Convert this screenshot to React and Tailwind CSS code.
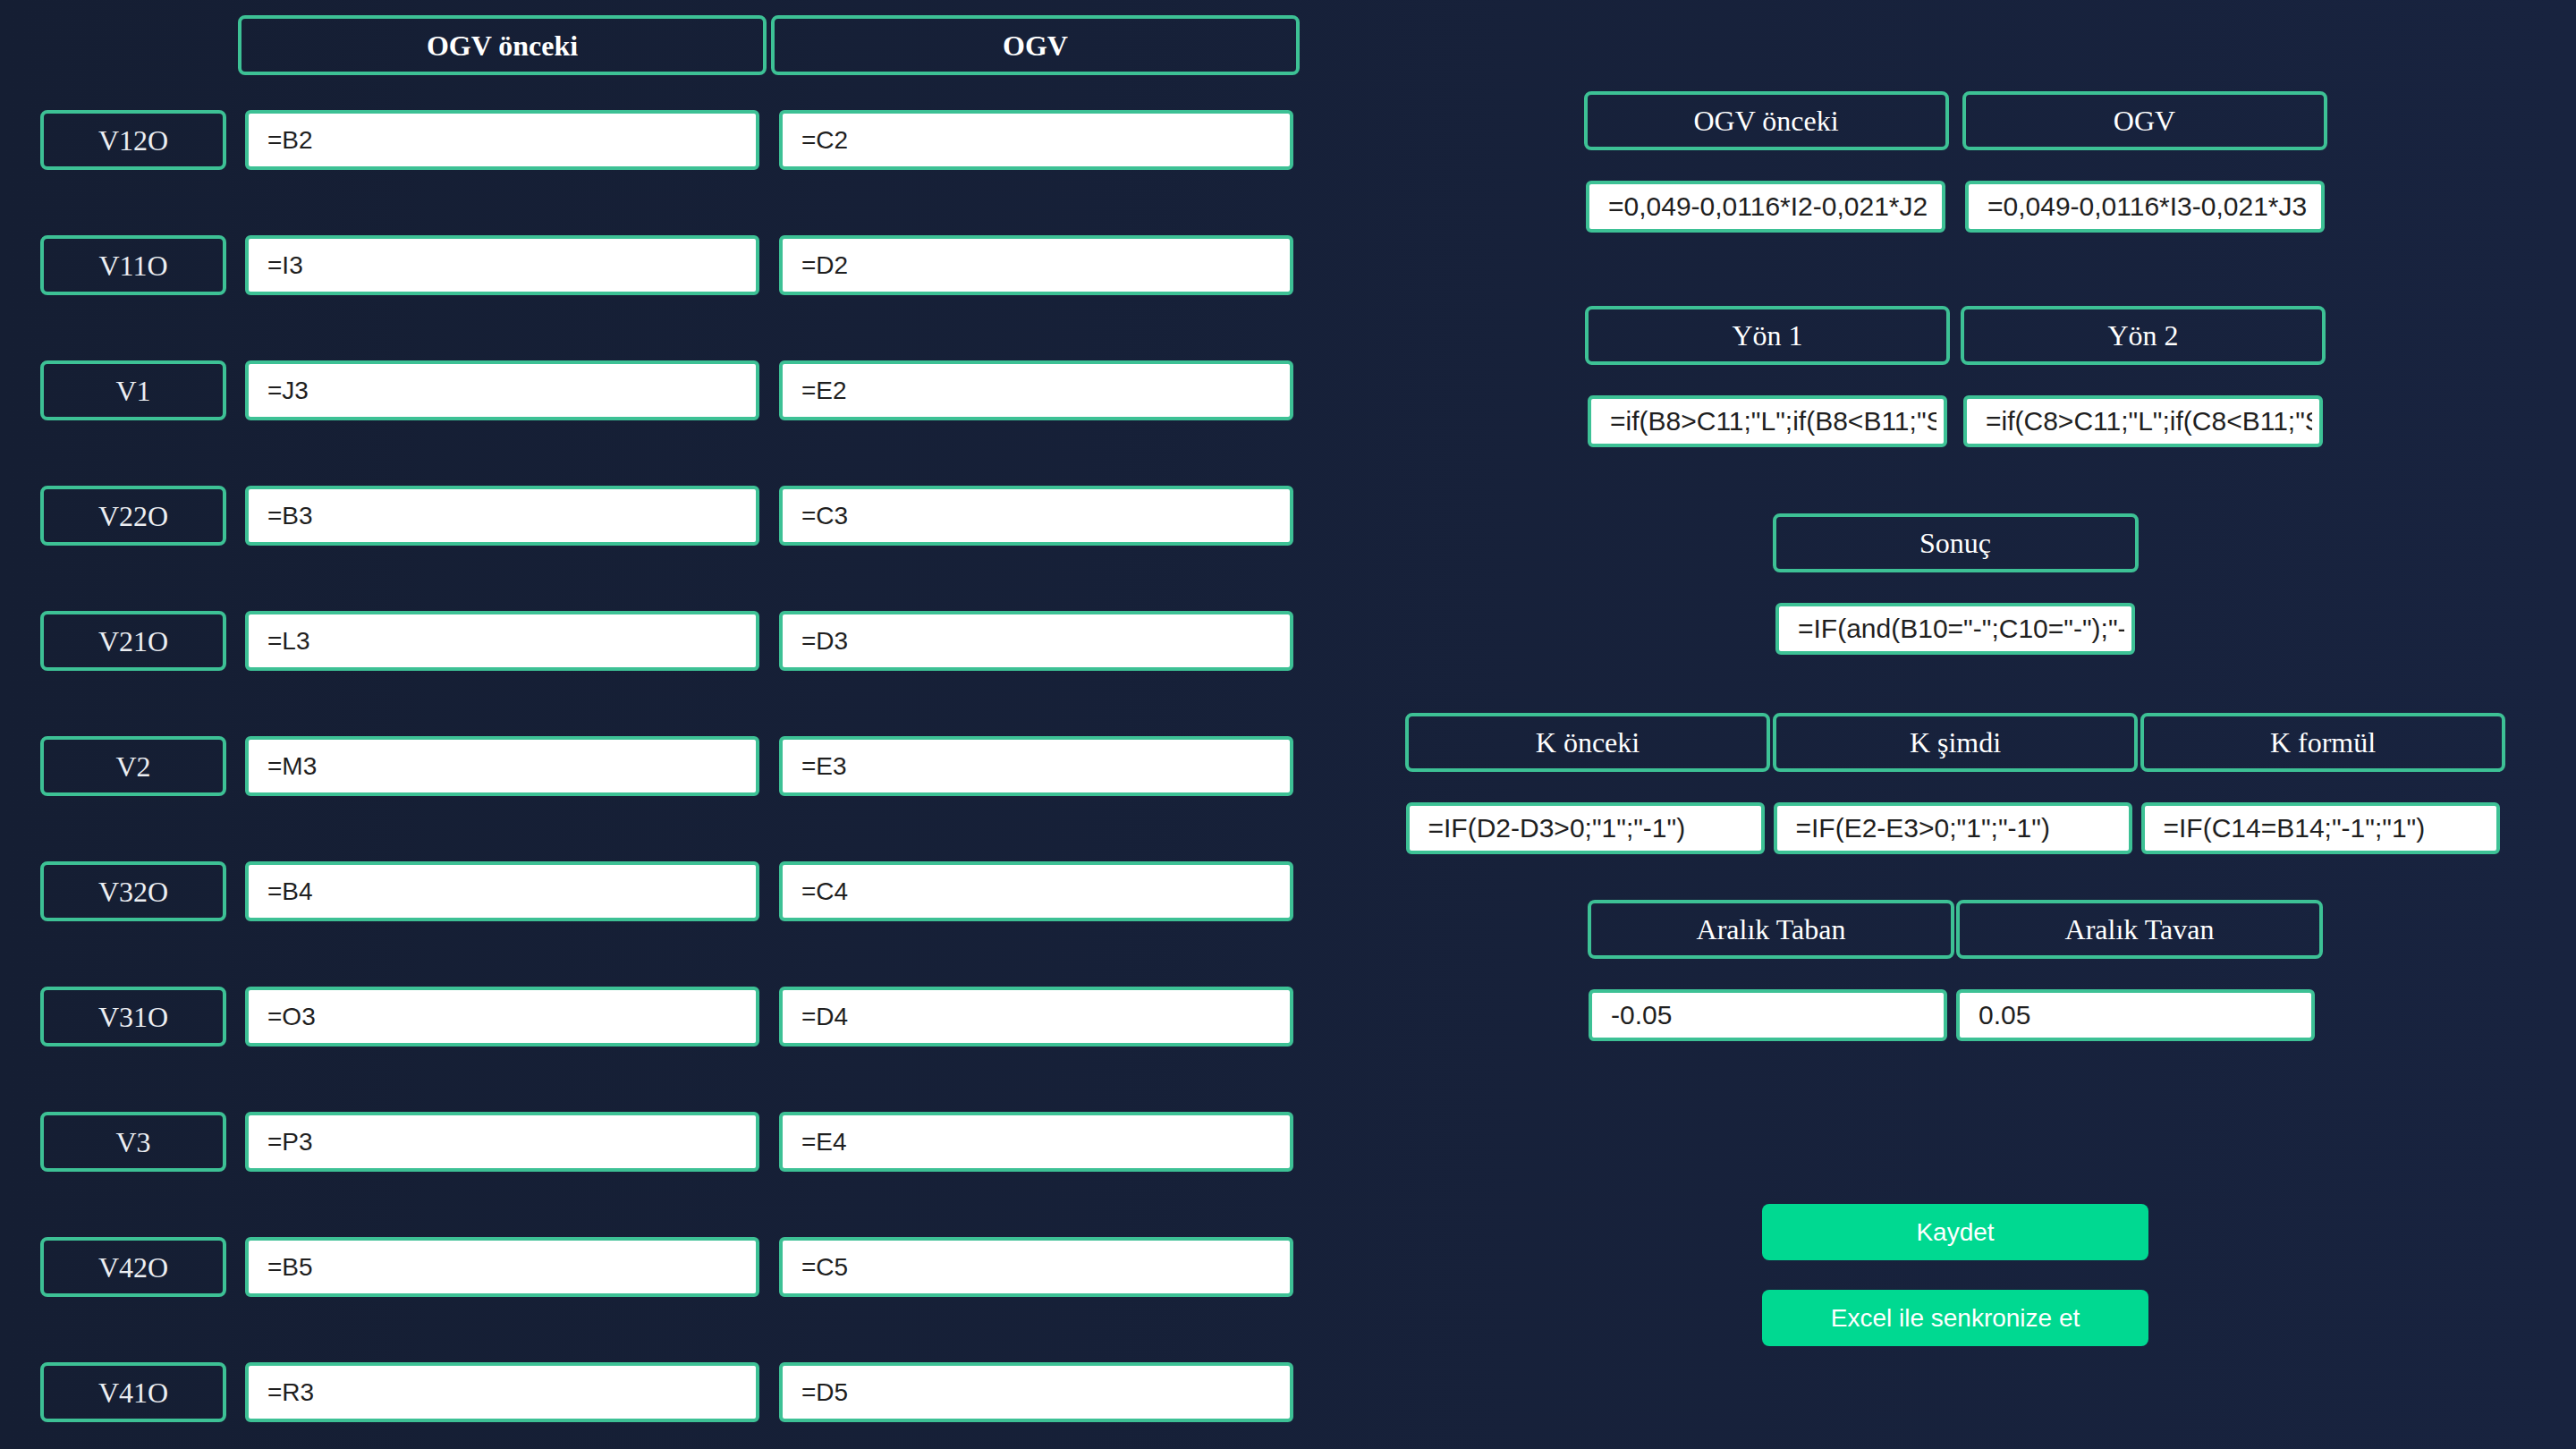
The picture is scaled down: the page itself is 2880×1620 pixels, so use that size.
import { useState } from "react";

const rows = [
  ["V12O", "=B2", "=C2"],
  ["V11O", "=I3", "=D2"],
  ["V1", "=J3", "=E2"],
  ["V22O", "=B3", "=C3"],
  ["V21O", "=L3", "=D3"],
  ["V2", "=M3", "=E3"],
  ["V32O", "=B4", "=C4"],
  ["V31O", "=O3", "=D4"],
  ["V3", "=P3", "=E4"],
  ["V42O", "=B5", "=C5"],
  ["V41O", "=R3", "=D5"],
];

const serif = "font-['Liberation_Serif',serif]";
const sans = "font-['Liberation_Sans',Arial,sans-serif]";

function Header({ children, className = "" }) {
  return (
    <div
      className={`h-[66px] flex items-center justify-center border-4 border-[#3dc195] rounded-lg text-[32px] text-white ${serif} ${className}`}
    >
      {children}
    </div>
  );
}

function Field({ value, className = "" }) {
  const [val, setVal] = useState(value);
  return (
    <input
      value={val}
      onChange={(e) => setVal(e.target.value)}
      className={`bg-white border-4 border-[#3dc195] rounded-md pl-[21px] pr-2 text-[#1f1f1f] outline-none ${sans} ${className}`}
    />
  );
}

function LeftTable() {
  return (
    <div className="w-[1492px] shrink-0 pl-[45px] pt-[17px]">
      {/* column headers */}
      <div className="flex gap-[5px] ml-[221px]">
        <Header className="w-[591px] h-[67px] font-bold">OGV önceki</Header>
        <Header className="w-[591px] h-[67px] font-bold">OGV</Header>
      </div>

      <div className="flex flex-col gap-[73px] mt-[39px]">
        {rows.map(([label, a, b]) => (
          <div key={label} className="flex items-center">
            <div
              className={`w-[208px] h-[67px] flex items-center justify-center border-4 border-[#3dc195] rounded-lg text-[32px] text-[#eceef2] ${serif}`}
            >
              {label}
            </div>
            <Field value={a} className="ml-[21px] w-[575px] h-[67px] text-[28px]" />
            <Field value={b} className="ml-[22px] w-[575px] h-[67px] text-[28px]" />
          </div>
        ))}
      </div>
    </div>
  );
}

function RightPanel() {
  return (
    <div className="flex-1 flex flex-col items-center pt-[102px]">
      {/* OGV */}
      <div className="flex gap-[15px]">
        <Header className="w-[408px]">OGV önceki</Header>
        <Header className="w-[408px]">OGV</Header>
      </div>
      <div className="flex gap-[22px] mt-[34px]">
        <Field value="=0,049-0,0116*I2-0,021*J2" className="w-[402px] h-[58px] text-[30px]" />
        <Field value="=0,049-0,0116*I3-0,021*J3" className="w-[402px] h-[58px] text-[30px]" />
      </div>

      {/* Yön */}
      <div className="flex gap-[12px] mt-[82px]">
        <Header className="w-[408px]">Yön 1</Header>
        <Header className="w-[408px]">Yön 2</Header>
      </div>
      <div className="flex gap-[18px] mt-[34px]">
        <Field value={'=if(B8>C11;"L";if(B8<B11;"S";"-"))'} className="w-[402px] h-[58px] text-[30px]" />
        <Field value={'=if(C8>C11;"L";if(C8<B11;"S";"-"))'} className="w-[402px] h-[58px] text-[30px]" />
      </div>

      {/* Sonuç */}
      <Header className="w-[409px] mt-[74px]">Sonuç</Header>
      <Field
        value={'=IF(and(B10="-";C10="-");"-";"+")'}
        className="w-[402px] h-[58px] text-[30px] mt-[34px]"
      />

      {/* K */}
      <div className="flex gap-[3px] mt-[65px]">
        <Header className="w-[408px]">K önceki</Header>
        <Header className="w-[408px]">K şimdi</Header>
        <Header className="w-[408px]">K formül</Header>
      </div>
      <div className="flex gap-[10px] mt-[34px] -ml-[6px]">
        <Field value={'=IF(D2-D3>0;"1";"-1")'} className="w-[401px] h-[58px] text-[30px]" />
        <Field value={'=IF(E2-E3>0;"1";"-1")'} className="w-[401px] h-[58px] text-[30px]" />
        <Field value={'=IF(C14=B14;"-1";"1")'} className="w-[401px] h-[58px] text-[30px]" />
      </div>

      {/* Aralık */}
      <div className="flex gap-[2px] mt-[51px]">
        <Header className="w-[410px]">Aralık Taban</Header>
        <Header className="w-[410px]">Aralık Tavan</Header>
      </div>
      <div className="flex gap-[10px] mt-[34px] -ml-[8px]">
        <Field value="-0.05" className="w-[401px] h-[58px] text-[30px]" />
        <Field value="0.05" className="w-[401px] h-[58px] text-[30px]" />
      </div>

      {/* actions */}
      <button
        className={`mt-[182px] w-[432px] h-[63px] rounded-lg bg-[#00d991] text-white text-[28px] font-medium ${sans}`}
      >
        Kaydet
      </button>
      <button
        className={`mt-[33px] w-[432px] h-[63px] rounded-lg bg-[#00d991] text-white text-[28px] font-medium ${sans}`}
      >
        Excel ile senkronize et
      </button>
    </div>
  );
}

export default function App() {
  return (
    <div className="w-[2880px] h-[1620px] overflow-hidden flex bg-linear-to-r from-[#151e33] to-[#18233f]">
      <LeftTable />
      <RightPanel />
    </div>
  );
}
